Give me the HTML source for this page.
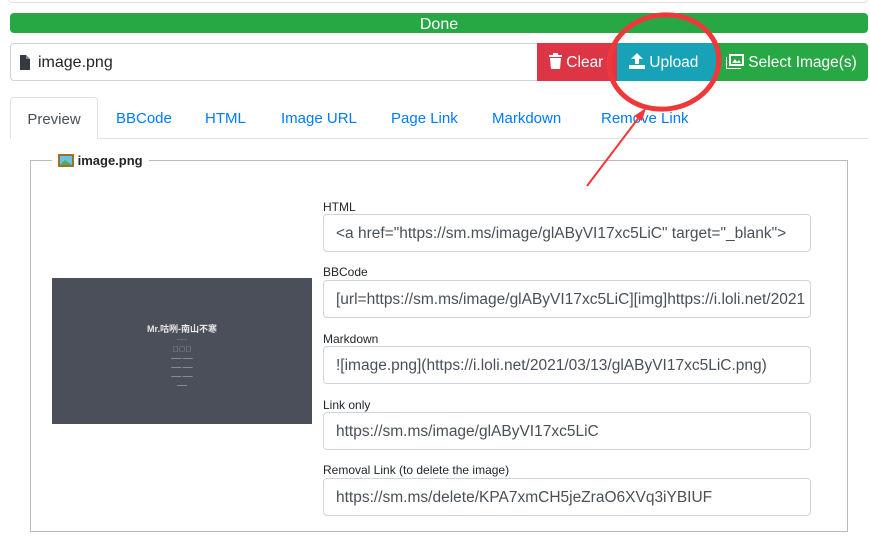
<!DOCTYPE html>
<html><head><meta charset="utf-8"><style>
*{box-sizing:border-box;margin:0;padding:0}
body{width:870px;height:557px;overflow:hidden;background:#fff;font-family:"Liberation Sans","Noto Sans CJK SC",sans-serif;color:#212529;position:relative}
.abs{position:absolute}
.topbox{left:8px;top:-10px;width:860px;height:13px;border:1px solid #dee2e6;border-radius:4px}
.done{left:10px;top:13px;width:858px;height:20px;background:#28a745;border-radius:4px;color:#fff;font-size:16px;text-align:center;line-height:21px;padding-top:1px}
.file{left:10px;top:43px;width:528px;height:38px;border:1px solid #ced4da;border-radius:4px 0 0 4px;font-size:16px;line-height:38px;padding-left:27px}
.btn{top:43px;height:38px;color:#fff;font-size:15.5px;line-height:40px;padding-left:12px}
.tabline{left:10px;top:138px;width:858px;height:1px;background:#dee2e6}
.tab{top:97px;height:42px;font-size:15px;line-height:44px;color:#007bff}
.active{left:10px;width:88px;border:1px solid #dee2e6;border-bottom:1px solid #fff;border-radius:4px 4px 0 0;background:#fff;color:#495057;text-align:center}
.fs{left:30px;top:160px;width:818px;height:372px;border:1px solid #bbb}
.legend{left:52px;top:152px;background:#fff;padding:0 6px;font-size:13px;font-weight:bold;line-height:18px}
.lab{left:323px;font-size:12px;color:#212529}
.inp{left:323px;width:488px;height:38px;border:1px solid #ced4da;border-radius:4px;font-size:15.5px;line-height:38px;padding-left:12px;white-space:nowrap;overflow:hidden;color:#495057}
.img{left:52px;top:278px;width:260px;height:146px;background:#4b4f5a;color:#e8e8e8;text-align:center}
</style></head><body>
<div class="abs topbox"></div>
<div class="abs done">Done</div>
<div class="abs file"><svg class="abs" style="left:9px;top:11px" width="10" height="15" viewBox="0 0 10 15"><path d="M0 0H6L10 4V15H0Z" fill="#343a40"/><path d="M6 0V4H10" fill="#888"/></svg>image.png</div>
<div class="abs btn" style="left:537px;width:80px;background:#dc3545"><svg style="vertical-align:-2px" width="13" height="16" viewBox="0 0 13 16"><rect x="0" y="2" width="13" height="2" fill="#fff"/><rect x="4" y="0" width="5" height="2" fill="#fff"/><path d="M1 5H12L11 16H2Z" fill="#fff"/></svg> Clear</div>
<div class="abs btn" style="left:617px;width:99px;background:#17a2b8"><svg style="vertical-align:-2px" width="16" height="16" viewBox="0 0 16 16"><path d="M8 0L14 6H10V11H6V6H2Z" fill="#fff"/><rect x="0" y="12" width="16" height="4" fill="#fff"/></svg> Upload</div>
<div class="abs btn" style="left:716px;width:152px;background:#28a745;border-radius:0 4px 4px 0;padding-left:10px"><svg style="vertical-align:-2px" width="18" height="15" viewBox="0 0 18 15"><rect x="3" y="0" width="15" height="12" fill="#fff"/><rect x="5" y="2" width="11" height="8" fill="#28a745"/><path d="M6 9L9 5L11 8L13 6L15 9Z" fill="#fff"/><path d="M0 3V15H15" stroke="#fff" stroke-width="2" fill="none"/></svg> Select Image(s)</div>
<div class="abs tabline"></div>
<div class="abs tab active">Preview</div>
<div class="abs tab" style="left:116px">BBCode</div>
<div class="abs tab" style="left:205px">HTML</div>
<div class="abs tab" style="left:281px">Image URL</div>
<div class="abs tab" style="left:391px">Page Link</div>
<div class="abs tab" style="left:492px">Markdown</div>
<div class="abs tab" style="left:601px">Remove Link</div>
<div class="abs fs"></div>
<div class="abs legend"><svg style="vertical-align:-2px" width="16" height="13" viewBox="0 0 16 13"><rect width="16" height="13" fill="#a0702a"/><rect x="2" y="2" width="12" height="9" fill="#6bc0e8"/><path d="M2 11L7 6L14 11Z" fill="#4caf50"/></svg> image.png</div>
<div class="abs img"><div style="margin-top:44px;font-size:9px;font-weight:bold">Mr.咕咧-南山不寒</div><div style="font-size:4px;margin-top:2px">········</div><div style="font-size:5px;line-height:9px;margin-top:4px">▢ ▢ ▢<br>—— ——<br>—— ——<br>—— ——<br>——</div></div>
<div class="abs lab" style="top:200px">HTML</div>
<div class="abs inp" style="top:214px">&lt;a href="https://sm.ms/image/glAByVI17xc5LiC" target="_blank"&gt;</div>
<div class="abs lab" style="top:265px">BBCode</div>
<div class="abs inp" style="top:280px">[url=https://sm.ms/image/glAByVI17xc5LiC][img]https://i.loli.net/2021</div>
<div class="abs lab" style="top:332px">Markdown</div>
<div class="abs inp" style="top:346px">![image.png](https://i.loli.net/2021/03/13/glAByVI17xc5LiC.png)</div>
<div class="abs lab" style="top:398px">Link only</div>
<div class="abs inp" style="top:412px">https://sm.ms/image/glAByVI17xc5LiC</div>
<div class="abs lab" style="top:463px">Removal Link (to delete the image)</div>
<div class="abs inp" style="top:478px">https://sm.ms/delete/KPA7xmCH5jeZraO6XVq3iYBIUF</div>
<svg class="abs" style="left:0;top:0" width="870" height="557"><ellipse cx="664" cy="62" rx="55" ry="47" fill="none" stroke="#f0383a" stroke-width="5" transform="rotate(-8 664 62)"/><line x1="587" y1="186" x2="640" y2="116" stroke="#f0383a" stroke-width="2"/><path d="M646 108L634 116L642 121Z" fill="#f0383a"/></svg>
</body></html>
